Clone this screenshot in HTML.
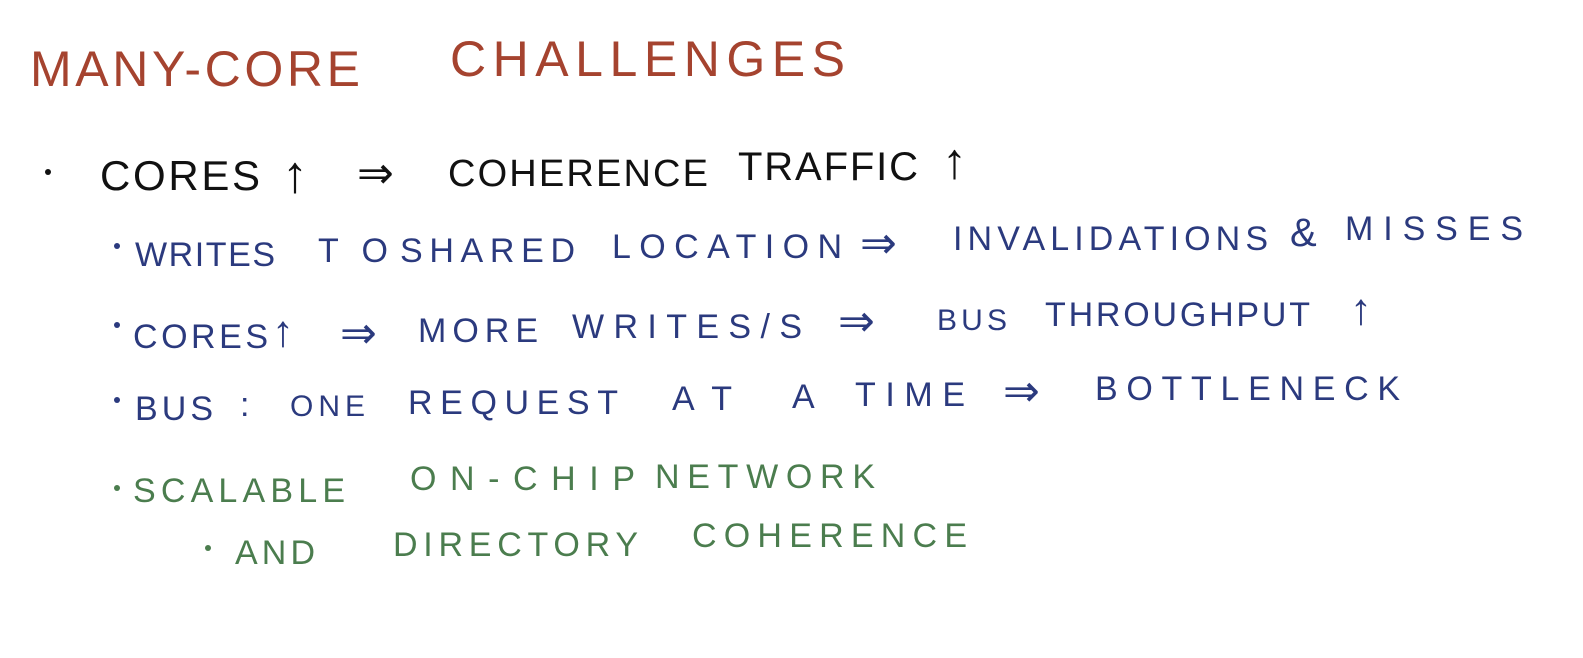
<!DOCTYPE html>
<html><head><style>
html,body{margin:0;padding:0;background:#fff;}
svg{display:block;}
text{font-family:"Liberation Sans",sans-serif;}
</style></head><body>
<svg width="1583" height="658" viewBox="0 0 1583 658" xmlns="http://www.w3.org/2000/svg">
<rect width="1583" height="658" fill="#fff"/>
<text x="30" y="86" font-size="50" fill="#a5432f" textLength="330" lengthAdjust="spacing">MANY-CORE</text>
<text x="450" y="76" font-size="50" fill="#a5432f" textLength="395" lengthAdjust="spacing">CHALLENGES</text>

<circle cx="48" cy="172" r="3" fill="#111"/>
<g fill="#111" font-size="42">
<text x="100" y="190" textLength="160" lengthAdjust="spacing">CORES</text>
<text x="282" y="192" font-size="52" font-weight="bold">↑</text>
<text x="357" y="188" font-size="44">⇒</text>
<text x="448" y="186" font-size="38" textLength="260" lengthAdjust="spacing">COHERENCE</text>
<text x="738" y="180" font-size="40" textLength="180" lengthAdjust="spacing">TRAFFIC</text>
<text x="942" y="178" font-size="50" font-weight="bold">↑</text>
</g>

<g fill="#2b3a7e" font-size="34">
<circle cx="117" cy="246" r="3"/>
<text x="135" y="266" textLength="140" lengthAdjust="spacing">WRITES</text>
<text x="318" y="262" textLength="70" lengthAdjust="spacing">TO</text>
<text x="400" y="262" textLength="175" lengthAdjust="spacing">SHARED</text>
<text x="612" y="258" textLength="230" lengthAdjust="spacing">LOCATION</text>
<text x="860" y="258" font-size="44">⇒</text>
<text x="953" y="250" textLength="315" lengthAdjust="spacing">INVALIDATIONS</text>
<text x="1290" y="246" font-size="40">&amp;</text>
<text x="1345" y="240" textLength="178" lengthAdjust="spacing">MISSES</text>

<circle cx="117" cy="325" r="3"/>
<text x="133" y="348" textLength="135" lengthAdjust="spacing">CORES</text>
<text x="272" y="346" font-size="44" font-weight="bold">↑</text>
<text x="340" y="348" font-size="44">⇒</text>
<text x="418" y="342" textLength="120" lengthAdjust="spacing">MORE</text>
<text x="572" y="338" textLength="230" lengthAdjust="spacing">WRITES/S</text>
<text x="838" y="336" font-size="44">⇒</text>
<text x="937" y="330" font-size="30" textLength="70" lengthAdjust="spacing">BUS</text>
<text x="1045" y="326" textLength="265" lengthAdjust="spacing">THROUGHPUT</text>
<text x="1350" y="324" font-size="44" font-weight="bold">↑</text>

<circle cx="117" cy="400" r="3"/>
<text x="135" y="420" textLength="78" lengthAdjust="spacing">BUS</text>
<text x="240" y="416">:</text>
<text x="290" y="416" font-size="30" textLength="75" lengthAdjust="spacing">ONE</text>
<text x="408" y="414" textLength="210" lengthAdjust="spacing">REQUEST</text>
<text x="672" y="410" textLength="60" lengthAdjust="spacing">AT</text>
<text x="792" y="408" textLength="30" lengthAdjust="spacing">A</text>
<text x="855" y="406" textLength="110" lengthAdjust="spacing">TIME</text>
<text x="1003" y="406" font-size="44">⇒</text>
<text x="1095" y="400" textLength="305" lengthAdjust="spacing">BOTTLENECK</text>
</g>

<g fill="#4b7d4e" font-size="34">
<circle cx="117" cy="488" r="3"/>
<text x="133" y="502" textLength="212" lengthAdjust="spacing">SCALABLE</text>
<text x="410" y="490" textLength="225" lengthAdjust="spacing">ON-CHIP</text>
<text x="655" y="488" textLength="220" lengthAdjust="spacing">NETWORK</text>
<circle cx="208" cy="548" r="3"/>
<text x="235" y="564" textLength="80" lengthAdjust="spacing">AND</text>
<text x="393" y="556" textLength="245" lengthAdjust="spacing">DIRECTORY</text>
<text x="692" y="547" textLength="275" lengthAdjust="spacing">COHERENCE</text>
</g>
</svg>
</body></html>
